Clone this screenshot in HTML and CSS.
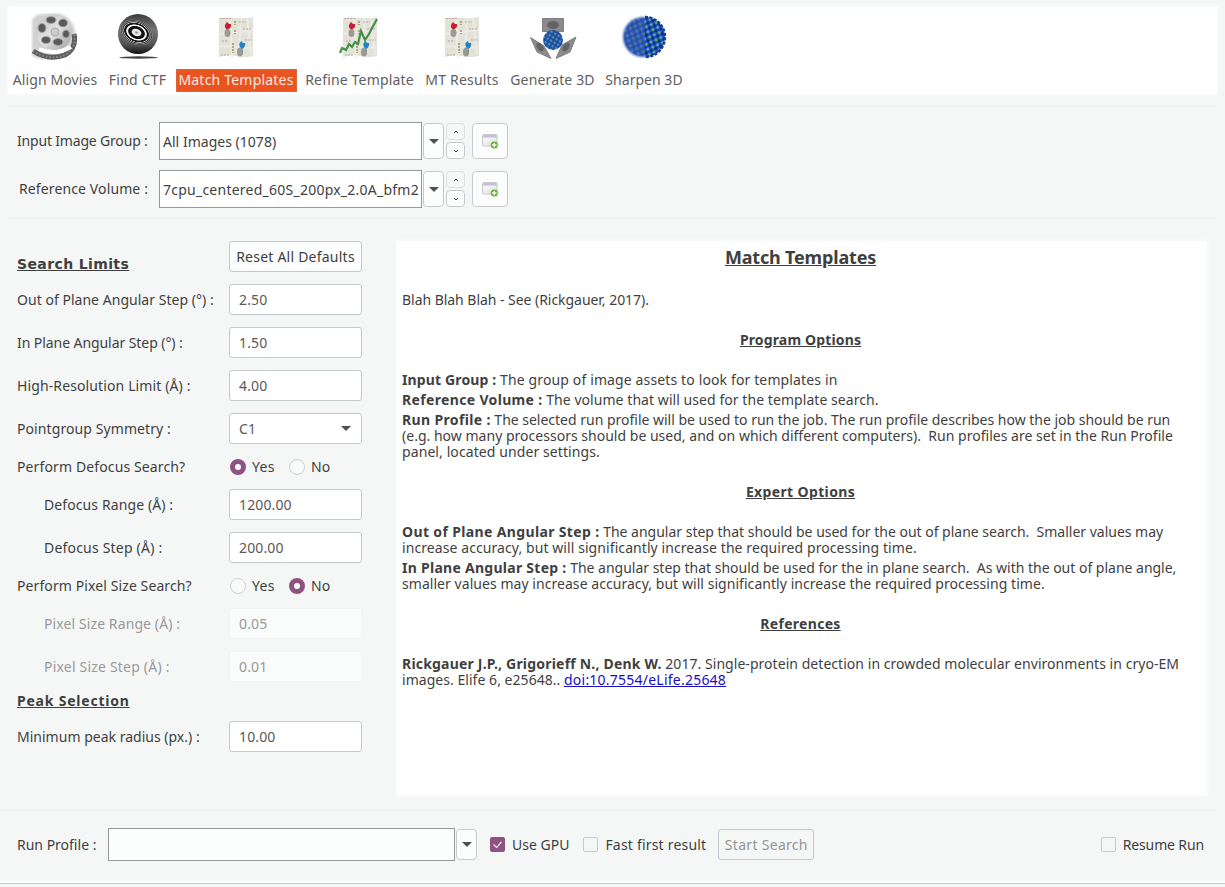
FILE: index.html
```html
<!DOCTYPE html>
<html lang="en">
<head>
<meta charset="utf-8">
<title>Match Templates</title>
<link rel="stylesheet" href="styles.css">
</head>
<body>
<svg class="defs" width="0" height="0" aria-hidden="true">
  <defs>
    <linearGradient id="ball" x1="0" y1="0" x2="0" y2="1"><stop offset="0" stop-color="#3c3c3c"/><stop offset=".4" stop-color="#777"/><stop offset=".75" stop-color="#555"/><stop offset="1" stop-color="#111"/></linearGradient>
    <radialGradient id="rings" cx=".5" cy=".5" r=".5"><stop offset="0" stop-color="#888"/><stop offset=".12" stop-color="#ddd"/><stop offset=".22" stop-color="#fff"/><stop offset=".29" stop-color="#111"/><stop offset=".43" stop-color="#111"/><stop offset=".48" stop-color="#fff"/><stop offset=".54" stop-color="#eee"/><stop offset=".58" stop-color="#111"/><stop offset=".66" stop-color="#222"/><stop offset=".69" stop-color="#ccc"/><stop offset=".74" stop-color="#222" stop-opacity=".8"/><stop offset=".79" stop-color="#aaa" stop-opacity=".8"/><stop offset=".83" stop-color="#333" stop-opacity=".6"/><stop offset=".88" stop-color="#999" stop-opacity=".5"/><stop offset=".93" stop-color="#444" stop-opacity=".3"/><stop offset="1" stop-color="#666" stop-opacity="0"/></radialGradient>
    <linearGradient id="reel" x1="0" y1="0" x2="1" y2="1"><stop offset="0" stop-color="#c4c4c4"/><stop offset=".5" stop-color="#e2e2e2"/><stop offset="1" stop-color="#999"/></linearGradient>
    <linearGradient id="pane" x1="0" y1="0" x2="1" y2="1"><stop offset="0" stop-color="#fff"/><stop offset="1" stop-color="#dcdde2"/></linearGradient>
    <pattern id="beads" width="7" height="8" patternUnits="userSpaceOnUse" patternTransform="rotate(24)"><rect width="7" height="8" fill="#1c46c0"/><circle cx="1.800" cy="1.800" r="1.500" fill="#5cc04a"/><circle cx="5.200" cy="5.800" r="1.500" fill="#4fb8a0"/><circle cx="5.200" cy="1.600" r="1.300" fill="#10187a"/><circle cx="1.600" cy="5.800" r="1.300" fill="#0d1b80"/></pattern>
    <pattern id="beads2" width="4" height="4" patternUnits="userSpaceOnUse" patternTransform="rotate(30)"><rect width="4" height="4" fill="#2457a0"/><circle cx="1" cy="1" r=".9" fill="#62a8d4"/><circle cx="3" cy="3" r=".8" fill="#173c86"/></pattern>
    <filter id="soft"><feGaussianBlur stdDeviation="1.200"/></filter>
    <filter id="softer"><feGaussianBlur stdDeviation=".5"/></filter>
    <g id="map">
      <path d="M0 1Q8 0 17 1T34 0V39Q25 41 17 39T0 40Z" fill="#e1e2d8"/>
      <path d="M11 1L13 40M22 1L20 40M0 17L34 13M0 29L34 31M28 2L32 38" stroke="#ecece4" stroke-width="2" fill="none"/>
      <path d="M1 1.500H12M20 5H27M24 12H33M3 24H9M26 23H33M2 38H10" stroke="#c5a49b" stroke-dasharray="2 1"/>
      <path d="M16 4v4M16 13v4M14 26v10M23 33v4" stroke="#b3a776" stroke-width="2" stroke-dasharray="2 1"/>
      <g filter="url(#softer)">
        <ellipse cx="8.500" cy="16" rx="3" ry="4" fill="#8c8d84" opacity=".85"/>
        <ellipse cx="21" cy="35" rx="3" ry="4.500" fill="#8c8d84" opacity=".85"/>
        <path d="M6.500 7l1.500-2l2 2h2q1 4-3.500 5.500q-4-2-2-5.500" fill="#c3222f"/>
        <path d="M20.500 26l2-2l1.500 2h2q1 3-2.500 6q-4-2-3-6" fill="#2383c6"/>
      </g>
    </g>
    <g id="addwin">
      <rect x=".5" y="1.500" width="14.500" height="11.500" rx="1" fill="url(#pane)" stroke="#c9cad0"/><path d="M1 2h13.500v2.500H1z" fill="#bfc2d8"/>
      <circle cx="12.300" cy="12" r="3.500" fill="#5eae22"/><path d="M12.300 9.700v4.600M10 12h4.600" stroke="#f2ffe0" stroke-width="1.500"/>
    </g>
  </defs>
</svg>

<nav class="toolbar">
  <div class="tool t1"><svg viewBox="0 0 48 48"><path d="M1 7Q5 0 12 1L24 0Q38 1 43 14Q46 22 44 33Q36 45 22 46Q8 47 1 43Z" fill="#d2d2d2" filter="url(#soft)"/><g filter="url(#softer)"><circle cx="23" cy="20" r="18" fill="url(#reel)" stroke="#ccc"/><g fill="#5a5a5a" stroke="#a8a8a8"><ellipse cx="20" cy="7" rx="5" ry="3.500"/><ellipse cx="32" cy="10" rx="4.500" ry="4"/><ellipse cx="11" cy="15" rx="4" ry="4.500"/><ellipse cx="35" cy="21" rx="3.500" ry="4"/><ellipse cx="15" cy="27" rx="4.500" ry="3.500"/><ellipse cx="27" cy="29" rx="5" ry="3.500"/></g><circle cx="24" cy="19" r="4" fill="#ccc" stroke="#aaa"/><path d="M2 38Q18 48 34 42Q46 35 43 21" fill="none" stroke="#5c5c5c" stroke-width="5"/><path d="M2 38Q18 48 34 42Q46 35 43 21" fill="none" stroke="#909090" stroke-width="2" stroke-dasharray="1.500 2"/><path d="M8 36Q24 43 40 34" stroke="#fff" stroke-width="4" fill="none"/></g></svg><span>Align Movies</span></div>
  <div class="tool t2"><svg viewBox="0 0 48 48"><circle cx="24" cy="21" r="20" fill="url(#ball)"/><ellipse cx="22.500" cy="19.500" rx="19" ry="13.500" fill="url(#rings)" transform="rotate(22 22.500 19.500)"/><ellipse cx="24.500" cy="44.500" rx="19.500" ry="1.200" fill="#444"/></svg><span>Find CTF</span></div>
  <div class="tool t3 active"><svg viewBox="0 0 48 48"><use href="#map" x="6" y="4"/></svg><span>Match Templates</span></div>
  <div class="tool t4"><svg viewBox="0 0 48 48"><use href="#map" x="7" y="4"/><path d="M4 40L6 35L10 37L13 31L16 34L19 29L22 31L25 18L29 27L33 21L36 15L41 6" fill="none" stroke="#46904b" stroke-width="2.200"/></svg><span>Refine Template</span></div>
  <div class="tool t5"><svg viewBox="0 0 48 48"><use href="#map" x="7" y="4"/></svg><span>MT Results</span></div>
  <div class="tool t6"><svg viewBox="0 0 48 48"><g fill="#8b8b8d" stroke="#808082"><path d="M13.500 5.500h21v13h-21z"/><path d="M1.500 24.500L15 33L22 45.500L8 39Z"/><path d="M47 24L33 32L27 45.500L41 39Z"/></g><g fill="#646466" filter="url(#softer)"><ellipse cx="24" cy="12" rx="6" ry="4"/><ellipse cx="11" cy="34" rx="3" ry="5" transform="rotate(-35 11 34)"/><ellipse cx="37" cy="34" rx="3" ry="5" transform="rotate(35 37 34)"/></g><circle cx="24" cy="27" r="10" fill="url(#beads2)"/></svg><span>Generate 3D</span></div>
  <div class="tool t7"><svg viewBox="0 0 48 48"><circle cx="23" cy="24" r="20" fill="#3b5fb4" filter="url(#soft)"/><circle cx="23" cy="24" r="19" fill="url(#beads)" opacity=".35" filter="url(#softer)"/><path d="M25 4A20 20 0 0 1 25 44Z" fill="url(#beads)"/><path d="M25 4A20 20 0 0 1 25 44" fill="none" stroke="#173a9c" stroke-width="2.500" stroke-dasharray="3 1.500"/></svg><span>Sharpen 3D</span></div>
</nav>

<section class="inputs">
  <div class="input-row">
    <label class="l1">Input Image Group :</label>
    <div class="combo"><span class="v1">All Images (1078)</span></div>
    <button class="drop"><i class="caret"></i></button>
    <div class="spin"><button class="off"><svg viewBox="0 0 6 4"><path d="M1 3L3 1L5 3"/></svg></button><button><svg viewBox="0 0 6 4"><path d="M1 1L3 3L5 1"/></svg></button></div>
    <button class="add"><svg width="17" height="16"><use href="#addwin"/></svg></button>
  </div>
  <div class="input-row">
    <label class="l2">Reference Volume :</label>
    <div class="combo"><span class="v2">7cpu_centered_60S_200px_2.0A_bfm2</span></div>
    <button class="drop"><i class="caret"></i></button>
    <div class="spin"><button class="off"><svg viewBox="0 0 6 4"><path d="M1 3L3 1L5 3"/></svg></button><button><svg viewBox="0 0 6 4"><path d="M1 1L3 3L5 1"/></svg></button></div>
    <button class="add"><svg width="17" height="16"><use href="#addwin"/></svg></button>
  </div>
</section>

<main class="main">
  <form class="limits">
    <div class="row"><h2 class="h-search">Search Limits</h2><div class="btn"><span class="b1">Reset All Defaults</span></div></div>
    <div class="row"><label class="f1">Out of Plane Angular Step (°) :</label><div class="field"><span>2.50</span></div></div>
    <div class="row"><label class="f2">In Plane Angular Step (°) :</label><div class="field"><span>1.50</span></div></div>
    <div class="row"><label class="f3">High-Resolution Limit (Å) :</label><div class="field"><span>4.00</span></div></div>
    <div class="row"><label class="f4">Pointgroup Symmetry :</label><div class="field select"><span>C1</span><i class="caret"></i></div></div>
    <div class="row short"><label class="f5">Perform Defocus Search?</label><div class="radios"><i class="radio on"></i><span class="yes">Yes</span><i class="radio"></i><span class="no">No</span></div></div>
    <div class="row sub"><label class="f6">Defocus Range (Å) :</label><div class="field"><span>1200.00</span></div></div>
    <div class="row sub"><label class="f7">Defocus Step (Å) :</label><div class="field"><span>200.00</span></div></div>
    <div class="row short"><label class="f8">Perform Pixel Size Search?</label><div class="radios"><i class="radio"></i><span class="yes">Yes</span><i class="radio on"></i><span class="no">No</span></div></div>
    <div class="row sub disabled"><label class="f9">Pixel Size Range (Å) :</label><div class="field"><span>0.05</span></div></div>
    <div class="row sub disabled"><label class="f10">Pixel Size Step (Å) :</label><div class="field"><span>0.01</span></div></div>
    <div class="row head"><h2 class="h-peak">Peak Selection</h2></div>
    <div class="row"><label class="f11">Minimum peak radius (px.) :</label><div class="field"><span>10.00</span></div></div>
  </form>

  <article class="info">
    <h1>Match Templates</h1>
    <p class="p1">Blah Blah Blah - See (Rickgauer, 2017).</p>
    <h3 class="s1">Program Options</h3>
    <p><b class="p2">Input Group :</b> <span class="p3">The group of image assets to look for templates in</span></p>
    <p><b class="p4">Reference Volume :</b> <span class="p5">The volume that will used for the template search.</span></p>
    <p><b class="p6">Run Profile :</b> <span class="p7">The selected run profile will be used to run the job. The run profile describes how the job should be run</span><br><span class="p8">(e.g. how many processors should be used, and on which different computers).&nbsp; Run profiles are set in the Run Profile</span><br><span class="p9">panel, located under settings.</span></p>
    <h3 class="s2">Expert Options</h3>
    <p><b class="p10">Out of Plane Angular Step :</b> <span class="p7">The angular step that should be used for the out of plane search.&nbsp; Smaller values may</span><br><span class="p12">increase accuracy, but will significantly increase the required processing time.</span></p>
    <p><b class="p13">In Plane Angular Step :</b> <span class="p7">The angular step that should be used for the in plane search.&nbsp; As with the out of plane angle,</span><br><span class="p15">smaller values may increase accuracy, but will significantly increase the required processing time.</span></p>
    <h3 class="s3">References</h3>
    <p><b class="p16">Rickgauer J.P., Grigorieff N., Denk W.</b> <span class="p17">2017. Single-protein detection in crowded molecular environments in cryo-EM</span><br><span class="p18">images. Elife 6, e25648..</span> <a class="p19" href="#">doi:10.7554/eLife.25648</a></p>
  </article>
</main>

<footer class="run">
  <label class="r1">Run Profile :</label>
  <div class="combo"></div>
  <button class="drop"><i class="caret"></i></button>
  <i class="check on"><svg viewBox="0 0 15 15"><path d="M3 7.500L6.500 11L12 4.500"/></svg></i><span class="r2">Use GPU</span>
  <i class="check c2"></i><span class="r3">Fast first result</span>
  <div class="btn off"><span class="r4">Start Search</span></div>
  <i class="check c3"></i><span class="r5">Resume Run</span>
</footer>
<div class="edge"></div>
</body>
</html>
```
FILE: styles.css
```css
* { box-sizing: border-box; }
body { margin: 0; width: 1225px; height: 887px; overflow: hidden; background: #f5f7f7; color: #3f3f3f; font: 14px/16px "Noto Sans", sans-serif; display: flex; flex-direction: column; }
.defs { position: absolute; }
h1, h2, h3, p { margin: 0; }
button { padding: 0; }
label, span, b, a { white-space: pre; }

/* Toolbar */
.toolbar { flex: none; height: 87px; margin: 7px 8px 0; background: #fff; display: flex; box-shadow: 0 0 3px #fff; color: #606060; }
.tool { display: flex; flex-direction: column; align-items: center; padding-top: 6px; }
.tool svg { width: 48px; height: 48px; display: block; }
.tool span { margin-top: 8px; height: 23px; line-height: 21px; }
.t1 { width: 94px; letter-spacing: .1px; }
.t2 { width: 71px; letter-spacing: .2px; }
.t3 { width: 127px; letter-spacing: .2px; }
.t4 { width: 119px; letter-spacing: .17px; }
.t5 { width: 86px; letter-spacing: .2px; }
.t6 { width: 95px; letter-spacing: .15px; }
.t7 { width: 88px; letter-spacing: .03px; }
.active span { background: #e95420; color: #fbe9e2; border: 1px solid #d9663f; padding: 0 2px 0 1px; line-height: 19px; }

/* Input selection */
.inputs { flex: none; margin: 12px 8px 0; height: 113px; border-top: 1px solid #f0f3f3; border-bottom: 1px solid #f0f3f3; padding: 15px 0 0 9px; display: flex; flex-direction: column; gap: 10px; }
.input-row { display: flex; align-items: center; height: 38px; }
.input-row label { width: 142px; }
.l1 { letter-spacing: -.18px; }
.l2 { letter-spacing: .12px; padding-left: 2px; }
.v1 { letter-spacing: .02px; }
.v2 { letter-spacing: .24px; }
.combo { background: #fff; border: 1px solid #999; width: 263px; height: 38px; display: flex; align-items: center; padding: 1px 0 0 3px; overflow: hidden; }
.drop, .add, .spin button { background: #fcfdfd; border: 1px solid #c6cacc; border-radius: 4px; display: flex; align-items: center; justify-content: center; }
.drop { width: 21px; height: 36px; margin-left: 1px; }
.caret { width: 0; height: 0; border: 5px solid transparent; border-bottom: 0; border-top-color: #505050; }
.spin { margin-left: 2px; width: 19px; display: flex; flex-direction: column; gap: 2px; }
.spin button { height: 17px; }
.spin .off { background: #f6f8f8; border-color: #dde0e1; }
.spin svg { width: 6px; height: 4px; fill: none; stroke: #444; }
.add { width: 36px; height: 36px; margin-left: 7px; }

/* Search settings */
.main { flex: none; display: flex; height: 592px; border-bottom: 1px solid #f0f3f3; padding: 16px 0 0 17px; margin-right: 8px; }
.limits { width: 380px; }
.row { height: 43px; display: flex; align-items: center; }
.row > label, .row > h2 { width: 212px; }
.sub > label { padding-left: 27px; }
.short { height: 33px; }
.head { height: 27px; padding-bottom: 2px; }
h2 { font-size: 14px; line-height: 16px; text-decoration: underline; }
.h-search { font-family: "DejaVu Sans", sans-serif; padding-top: 14px; letter-spacing: .38px; }
.h-peak { letter-spacing: .78px; }
.btn, .field { width: 133px; height: 31px; border: 1px solid #c3c9cd; border-radius: 3px; background: #fcfdfd; display: flex; align-items: center; }
.btn { justify-content: center; }
.field { background: #fff; color: #5a5a5a; padding-left: 9px; letter-spacing: .12px; }
.select { justify-content: space-between; padding-right: 10px; }
.b1 { letter-spacing: .23px; }
.f1 { letter-spacing: .03px; }
.f2 { letter-spacing: -.07px; }
.f3 { letter-spacing: .12px; }
.f4 { letter-spacing: .09px; }
.f5 { letter-spacing: .12px; }
.f6, .f8, .f9 { letter-spacing: .1px; }
.f7, .f10 { letter-spacing: .2px; }
.f11 { letter-spacing: .01px; }
.radios { display: flex; align-items: center; }
.radio { width: 16px; height: 16px; border: 1px solid #cfd1d1; border-radius: 50%; background: #fafafa; margin-left: 1px; }
.radio.on { border: 5px solid #8e5380; background: #fff; }
.yes { width: 36px; padding-left: 6px; margin-right: 6px; letter-spacing: .3px; }
.no { padding-left: 6px; letter-spacing: .2px; }
.disabled { color: #999; }
.disabled .field { color: #999; background: #fafbfb; border-color: #f2f3f3; }

/* Help panel */
.info { width: 810px; height: 554px; margin-top: 6px; background: #fff; padding: 6px 5px; box-shadow: 0 0 4px #fff; }
h1, h3 { text-align: center; text-decoration: underline; padding-right: 3px; }
h1 { font-size: 18px; line-height: 20px; margin-bottom: 25px; letter-spacing: -.17px; }
h3 { font-size: 14px; line-height: 16px; margin: 24px 0; }
.info p { margin-bottom: 4px; }
a { color: #1a0dc4; }
.s1 { letter-spacing: .15px; }
.s2 { letter-spacing: .36px; }
.s3 { letter-spacing: .3px; }
.p1 { letter-spacing: -.04px; }
.p2 { letter-spacing: .14px; }
.p3 { letter-spacing: .13px; }
.p4 { letter-spacing: .34px; }
.p5 { letter-spacing: .06px; }
.p6 { letter-spacing: .35px; }
.p7 { letter-spacing: -.01px; }
.p8 { letter-spacing: .015px; }
.p9 { letter-spacing: .09px; }
.p10 { letter-spacing: .36px; }
.p12 { letter-spacing: .08px; }
.p13 { letter-spacing: .27px; }
.p15 { letter-spacing: .05px; }
.p16 { letter-spacing: .2px; }
.p17 { letter-spacing: .045px; }
.p18 { letter-spacing: .04px; }
.p19 { letter-spacing: .23px; }

/* Run controls */
.run { flex: none; height: 70px; padding: 0 21px 3px 17px; display: flex; align-items: center; }
.run > label { width: 91px; }
.run .combo { width: 347px; height: 33px; background: #fcfdfd; }
.run .drop { height: 31px; }
.check { width: 15px; height: 15px; border: 1px solid #c8cccc; border-radius: 2px; margin-right: 7px; }
.check.on { background: #8e5380; border-color: #8e5380; margin-left: 13px; }
.check svg { display: block; width: 13px; height: 13px; fill: none; stroke: #fff; stroke-width: 1.300; }
.c2 { margin-left: 14px; }
.c3 { margin-left: auto; }
.r3 { letter-spacing: .2px; }
.r4 { letter-spacing: .3px; }
.r5 { letter-spacing: -.13px; }
.run .btn { width: 96px; margin-left: 12px; background: #f5f7f7; color: #929696; }
.edge { flex: none; height: 3px; border-top: 2px solid #fff; border-bottom: 1px solid #c9cbcb; }
```
